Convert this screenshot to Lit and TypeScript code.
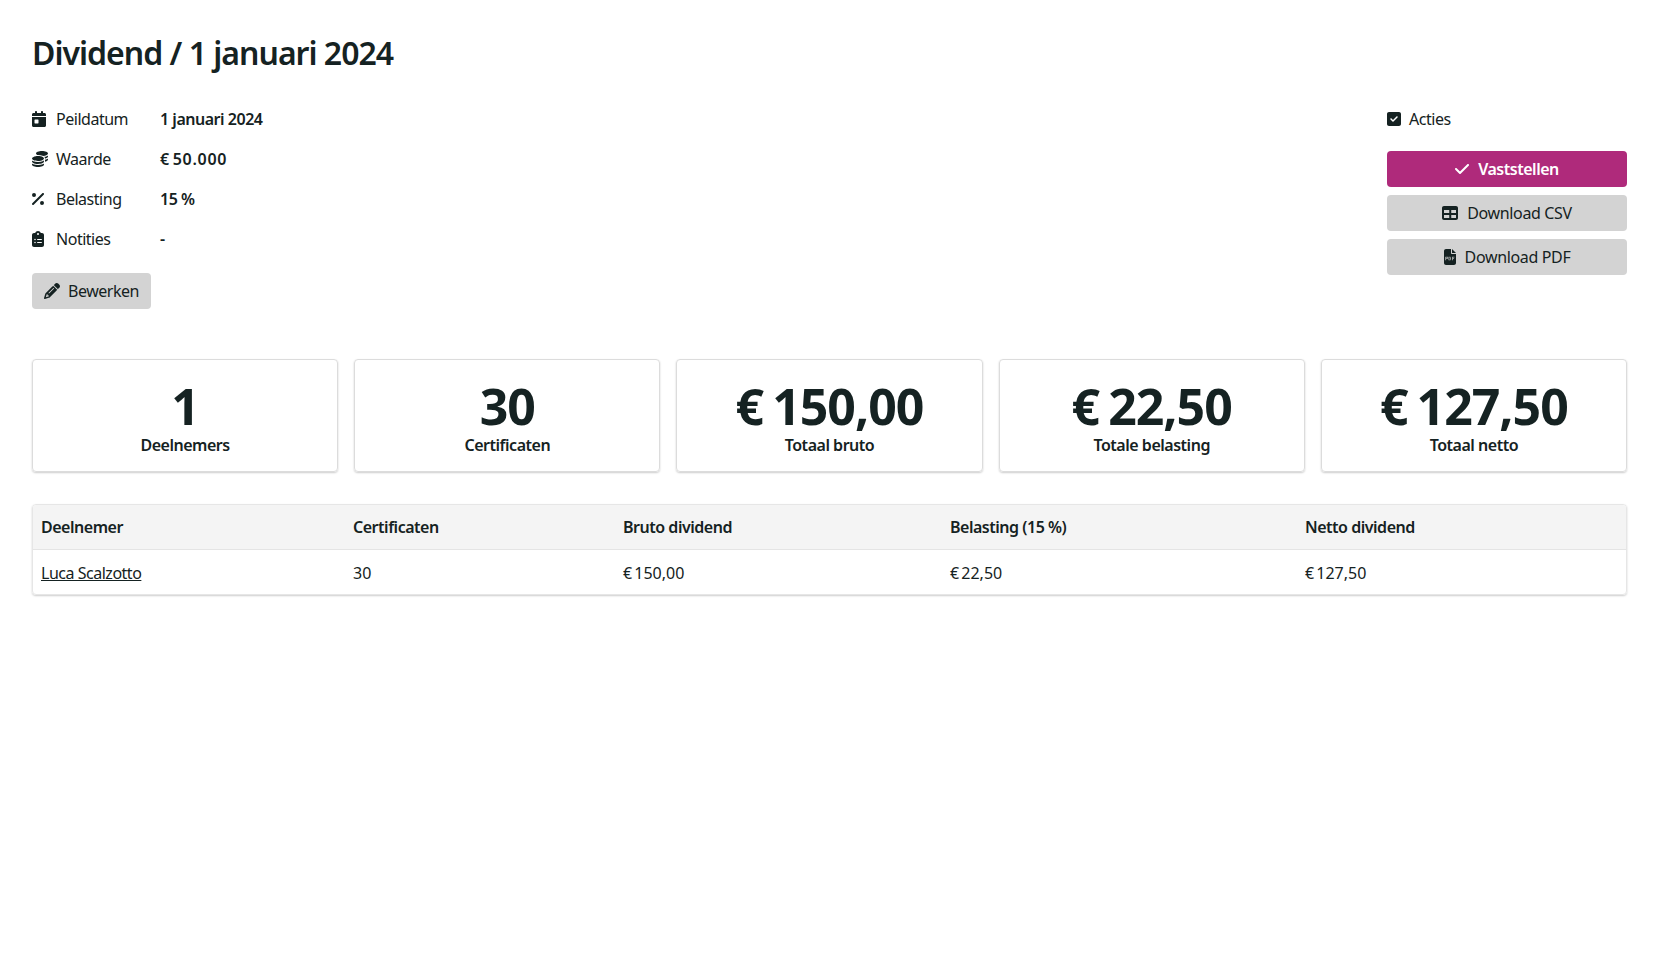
import { LitElement, html, css, svg } from "lit";
import { customElement } from "lit/decorators.js";

const ic = (vb: string, body: unknown) => html`<svg class="ic" viewBox="${vb}" fill="currentColor" aria-hidden="true">${body}</svg>`;

const calendar = ic("0 0 448 512", svg`<path d="M96 32V64H48C21.5 64 0 85.5 0 112v48H448V112c0-26.5-21.5-48-48-48H352V32c0-17.7-14.3-32-32-32s-32 14.3-32 32V64H160V32c0-17.7-14.3-32-32-32S96 14.3 96 32zM448 192H0V464c0 26.5 21.5 48 48 48H400c26.5 0 48-21.5 48-48V192zM96 272h96c8.800 0 16 7.200 16 16v96c0 8.800-7.200 16-16 16H96c-8.800 0-16-7.200-16-16V288c0-8.800 7.200-16 16-16z"/>`);
const coins = ic("0 0 512 512", svg`<path d="M512 80c0 18-14.300 34.600-38.400 48c-29.100 16.100-72.500 27.500-122.300 30.900c-3.700-1.800-7.400-3.500-11.300-5C300.600 137.400 248.200 128 192 128c-8.300 0-16.400 .2-24.500 .6l-1.100-.6C142.300 114.600 128 98 128 80c0-44.200 86-80 192-80S512 35.800 512 80zM160.700 161.100c10.200-.7 20.700-1.100 31.300-1.100c62.200 0 117.400 12.300 152.500 31.400C369.300 204.900 384 221.700 384 240c0 4-.7 7.900-2.100 11.700c-4.600 13.200-17 25.300-35 35.500c0 0 0 0 0 0c-.1 .1-.3 .1-.4 .2l0 0 0 0c-.3 .2-.6 .3-.9 .5c-35 19.400-90.800 32-153.600 32c-59.600 0-112.900-11.300-148.200-29.100c-1.900-.9-3.700-1.900-5.500-2.900C14.300 274.600 0 258 0 240c0-34.800 53.400-64.500 128-75.400c10.500-1.500 21.400-2.700 32.700-3.500zM416 240c0-21.900-10.600-39.900-24.100-53.400c28.300-4.400 54.200-11.400 76.200-20.500c16.300-6.800 31.500-15.200 43.900-25.500V176c0 19.300-16.500 37.100-43.800 50.900c-14.600 7.400-32.400 13.700-52.400 18.500c.1-1.800 .2-3.500 .2-5.300zm-32 96c0 18-14.300 34.600-38.400 48c-1.800 1-3.600 1.900-5.500 2.900C304.900 404.700 251.600 416 192 416c-62.800 0-118.600-12.600-153.600-32C14.300 370.600 0 354 0 336V300.600c12.500 10.300 27.600 18.700 43.900 25.500C83.400 342.600 135.800 352 192 352s108.600-9.400 148.100-25.900c7.800-3.200 15.300-6.900 22.400-10.900c6.100-3.400 11.800-7.200 17.200-11.200c1.500-1.100 2.900-2.300 4.300-3.400V304v5.700V336zm32 0V304 278.100c19-4.200 36.500-9.500 52.100-16c16.300-6.800 31.500-15.200 43.900-25.500V272c0 10.500-5 21-14.900 30.900c-16.300 16.300-45 29.700-81.300 38.400c.1-1.700 .2-3.500 .2-5.300zM192 448c56.200 0 108.600-9.400 148.100-25.900c16.300-6.800 31.500-15.200 43.900-25.500V432c0 44.200-86 80-192 80S0 476.200 0 432V396.600c12.500 10.300 27.600 18.700 43.900 25.500C83.400 438.600 135.800 448 192 448z"/>`);
const percent = ic("0 0 384 512", svg`<path d="M374.600 118.600c12.500-12.500 12.500-32.800 0-45.300s-32.800-12.500-45.300 0l-320 320c-12.500 12.500-12.500 32.800 0 45.300s32.800 12.500 45.300 0l320-320zM128 128A64 64 0 1 0 0 128a64 64 0 1 0 128 0zM384 384a64 64 0 1 0 -128 0 64 64 0 1 0 128 0z"/>`);
const clipboard = ic("0 0 384 512", svg`<path fill-rule="evenodd" d="M192 0c-41.800 0-77.400 26.700-90.500 64H64C28.700 64 0 92.700 0 128V448c0 35.300 28.700 64 64 64H320c35.300 0 64-28.700 64-64V128c0-35.300-28.700-64-64-64H282.500C269.400 26.700 233.800 0 192 0zm0 64a32 32 0 1 1 0 64 32 32 0 1 1 0-64zM72 272a24 24 0 1 1 48 0 24 24 0 1 1 -48 0zm104-16H304c8.800 0 16 7.200 16 16s-7.200 16-16 16H176c-8.800 0-16-7.200-16-16s7.200-16 16-16zM72 368a24 24 0 1 1 48 0 24 24 0 1 1 -48 0zm88 0c0-8.800 7.200-16 16-16H304c8.800 0 16 7.200 16 16s-7.200 16-16 16H176c-8.800 0-16-7.200-16-16z"/>`);
const pencil = ic("0 0 512 512", svg`<path d="M410.300 231l11.300-11.300-33.900-33.900-62.100-62.100L291.700 89.800l-11.300 11.300-22.600 22.600L58.600 322.900c-10.400 10.400-18 23.300-22.200 37.400L1 480.700c-2.500 8.400-.2 17.500 6.100 23.700s15.300 8.500 23.700 6.100l120.300-35.400c14.100-4.200 27-11.800 37.400-22.200L387.700 253.700 410.300 231zM160 399.400l-9.100 22.700c-4 3.100-8.500 5.400-13.300 6.900L59.400 452l23-78.100c1.400-4.900 3.800-9.400 6.900-13.300l22.700-9.100v32c0 8.800 7.200 16 16 16h32zM362.700 18.700L348.300 33.200 325.700 55.800 314.300 67.100l33.900 33.900 62.100 62.100 33.900 33.900 11.300-11.300 22.600-22.600 14.500-14.500c25-25 25-65.500 0-90.500L453.300 18.700c-25-25-65.500-25-90.500 0zm-47.400 168l-144 144c-6.200 6.200-16.400 6.200-22.600 0s-6.200-16.400 0-22.600l144-144c6.200-6.200 16.400-6.200 22.600 0s6.200 16.400 0 22.600z"/>`);
const squareCheck = ic("0 0 448 512", svg`<path d="M64 32C28.700 32 0 60.700 0 96V416c0 35.300 28.700 64 64 64H384c35.300 0 64-28.700 64-64V96c0-35.300-28.700-64-64-64H64zM337 209L209 337c-9.400 9.400-24.600 9.400-33.900 0l-64-64c-9.400-9.400-9.400-24.600 0-33.900s24.600-9.400 33.900 0l47 47L303 175c9.400-9.400 24.600-9.400 33.900 0s9.400 24.600 0 33.900z"/>`);
const check = ic("0 0 448 512", svg`<path d="M438.600 105.400c12.500 12.500 12.500 32.800 0 45.300l-256 256c-12.500 12.500-32.800 12.500-45.300 0l-128-128c-12.500-12.500-12.500-32.800 0-45.300s32.800-12.500 45.300 0L160 338.700 393.400 105.400c12.500-12.500 32.800-12.500 45.300 0z"/>`);
const table = ic("0 0 512 512", svg`<path d="M64 32C28.700 32 0 60.700 0 96V416c0 35.300 28.700 64 64 64H448c35.300 0 64-28.700 64-64V96c0-35.300-28.700-64-64-64H64zM64 160H232V256H64V160zm0 160H232v96H64V320zm232 96V320H448v96H296zM448 256H296V160H448v96z"/>`);
const pdf = ic("0 0 384 512", svg`<path d="M0 64C0 28.700 28.700 0 64 0H224V128c0 17.700 14.300 32 32 32H384V448c0 35.300-28.700 64-64 64H64c-35.300 0-64-28.700-64-64V64zm384 64H256V0L384 128z"/><g fill="#d3d3d3"><rect x="44" y="250" width="22" height="110"/><rect x="66" y="250" width="40" height="20"/><rect x="66" y="295" width="40" height="20"/><rect x="96" y="250" width="20" height="65"/><rect x="146" y="250" width="22" height="110"/><rect x="168" y="250" width="38" height="20"/><rect x="168" y="340" width="38" height="20"/><rect x="200" y="268" width="22" height="74"/><rect x="256" y="250" width="22" height="110"/><rect x="278" y="250" width="56" height="20"/><rect x="278" y="295" width="44" height="20"/></g>`);

const rows = [
  { icon: calendar, label: "Peildatum", value: "1 januari 2024", cls: "" },
  { icon: coins, label: "Waarde", value: "€ 50.000", cls: "wide" },
  { icon: percent, label: "Belasting", value: "15 %", cls: "" },
  { icon: clipboard, label: "Notities", value: "-", cls: "" },
];
const stats = [
  ["1", "Deelnemers"],
  ["30", "Certificaten"],
  ["€ 150,00", "Totaal bruto"],
  ["€ 22,50", "Totale belasting"],
  ["€ 127,50", "Totaal netto"],
];

@customElement("app-root")
export class AppRoot extends LitElement {
  static styles = css`
    :host {
      display: block;
      padding: 32px;
      background: #fff;
      color: #152222;
      font-family: "Noto Sans", sans-serif;
      font-size: 16px;
      line-height: 24px;
      letter-spacing: -0.48px;
      min-height: 900px;
      box-sizing: border-box;
    }
    h1 {
      margin: 0;
      font-size: 32px;
      line-height: 42px;
      font-weight: 600;
      letter-spacing: -1px;
    }
    .ic { height: 16px; width: auto; display: block; flex: none; }
    .top {
      display: flex;
      justify-content: space-between;
      margin-top: 25px;
    }
    .info { display: grid; grid-template-columns: 128px auto; grid-auto-rows: 40px; align-items: center; justify-content: start; }
    .lab { display: grid; grid-template-columns: 24px auto; align-items: center; }
    .val { font-weight: 600; }
    .wide { letter-spacing: 0.7px; word-spacing: -2px; }
    .btn {
      display: flex;
      align-items: center;
      justify-content: center;
      gap: 9px;
      height: 36px;
      box-sizing: border-box;
      border-radius: 4px;
      background: #d3d3d3;
      color: #152222;
      letter-spacing: -0.35px;
    }
    .edit { width: 119px; margin-top: 14px; gap: 8px; letter-spacing: -0.48px; }
    .actions { width: 240px; display: flex; flex-direction: column; gap: 8px; }
    .ahead { display: flex; align-items: center; gap: 8px; height: 24px; margin-bottom: 12px; margin-top: 8px; }
    .primary { background: #af2a7b; color: #fff; font-weight: 600; letter-spacing: -0.48px; }
    .stats { display: grid; grid-template-columns: repeat(5, 1fr); gap: 16px; margin-top: 50px; }
    .card {
      height: 113px;
      box-sizing: border-box;
      border: 1px solid #dcdcdc;
      border-radius: 4px;
      box-shadow: 0 1px 2px rgba(0,0,0,.2);
      display: flex;
      flex-direction: column;
      align-items: center;
      padding-top: 18px;
    }
    .num { font-size: 50px; line-height: 57px; font-weight: 700; letter-spacing: -1px; word-spacing: -3px; }
    .cap { font-weight: 600; line-height: 20px; }
    .tbl {
      margin-top: 32px;
      border: 1px solid #e6e6e6;
      border-radius: 4px;
      box-shadow: 0 1px 2px rgba(0,0,0,.2);
      overflow: hidden;
    }
    .tr { display: grid; grid-template-columns: 312px 270px 327px 355px 1fr; height: 44px; box-sizing: border-box; padding-top: 1px; align-items: center; padding-left: 8px; letter-spacing: 0; word-spacing: -2px; }
    .th { height: 45px; padding-top: 0; background: #f4f4f4; border-bottom: 1px solid #e4e4e4; font-weight: 600; letter-spacing: -0.48px; word-spacing: 0; }
    a { color: inherit; text-decoration: underline; letter-spacing: -0.48px; word-spacing: 0; }
  `;

  render() {
    return html`
      <h1>Dividend / 1 januari 2024</h1>
      <div class="top">
        <div>
          <div class="info">
            ${rows.map((r) => html`<div class="lab">${r.icon}<span>${r.label}</span></div><div class="val ${r.cls}">${r.value}</div>`)}
          </div>
          <div class="btn edit">${pencil}<span>Bewerken</span></div>
        </div>
        <div class="actions">
          <div class="ahead">${squareCheck}<span>Acties</span></div>
          <div class="btn primary">${check}<span>Vaststellen</span></div>
          <div class="btn">${table}<span>Download CSV</span></div>
          <div class="btn">${pdf}<span>Download PDF</span></div>
        </div>
      </div>
      <div class="stats">
        ${stats.map(([n, c]) => html`<div class="card"><div class="num">${n}</div><div class="cap">${c}</div></div>`)}
      </div>
      <div class="tbl">
        <div class="tr th"><div>Deelnemer</div><div>Certificaten</div><div>Bruto dividend</div><div>Belasting (15 %)</div><div>Netto dividend</div></div>
        <div class="tr"><div><a href="#">Luca Scalzotto</a></div><div>30</div><div>€ 150,00</div><div>€ 22,50</div><div>€ 127,50</div></div>
      </div>
    `;
  }
}
